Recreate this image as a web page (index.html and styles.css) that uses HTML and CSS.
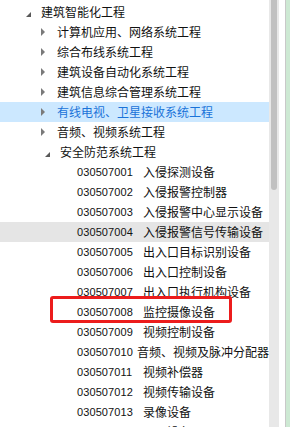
FILE: index.html
```html
<!DOCTYPE html>
<html lang="zh-CN">

<head>
    <meta charset="UTF-8">
    <meta name="viewport" content="width=device-width, initial-scale=1.0">
    <title>清单项目树</title>
    <link rel="stylesheet" href="styles.css">
</head>

<body>
    <div class="frame">
        <div class="tree-panel">
            <ul class="tree">
                <li class="node level-0"><span class="arrow open"></span>建筑智能化工程</li>
                <li class="node level-1"><span class="arrow"></span>计算机应用、网络系统工程</li>
                <li class="node level-1"><span class="arrow"></span>综合布线系统工程</li>
                <li class="node level-1"><span class="arrow"></span>建筑设备自动化系统工程</li>
                <li class="node level-1"><span class="arrow"></span>建筑信息综合管理系统工程</li>
                <li class="node level-1 selected"><span class="arrow"></span>有线电视、卫星接收系统工程</li>
                <li class="node level-1"><span class="arrow"></span>音频、视频系统工程</li>
                <li class="node level-1"><span class="arrow open"></span>安全防范系统工程</li>
                <li class="node level-2"><span class="code">030507001</span>入侵探测设备</li>
                <li class="node level-2"><span class="code">030507002</span>入侵报警控制器</li>
                <li class="node level-2"><span class="code">030507003</span>入侵报警中心显示设备</li>
                <li class="node level-2 hover"><span class="code">030507004</span>入侵报警信号传输设备</li>
                <li class="node level-2"><span class="code">030507005</span>出入口目标识别设备</li>
                <li class="node level-2"><span class="code">030507006</span>出入口控制设备</li>
                <li class="node level-2"><span class="code">030507007</span>出入口执行机构设备</li>
                <li class="node level-2"><span class="code">030507008</span>监控摄像设备</li>
                <li class="node level-2"><span class="code">030507009</span>视频控制设备</li>
                <li class="node level-2"><span class="code">030507010</span>音频、视频及脉冲分配器</li>
                <li class="node level-2"><span class="code">030507011</span>视频补偿器</li>
                <li class="node level-2"><span class="code">030507012</span>视频传输设备</li>
                <li class="node level-2"><span class="code">030507013</span>录像设备</li>
                <li class="node level-2"><span class="code">030507014</span>显示设备</li>
            </ul>
            <!-- red annotation box around 030507008 -->
            <div class="mark"></div>
        </div>
        <div class="scrollbar">
            <div class="thumb"></div>
        </div>
        <div class="gutter"></div>
        <div class="side"></div>
    </div>
</body>

</html>
```

FILE: styles.css
```css
body {
    margin: 0;
    padding: 0;
    background-color: #fff;
    font-family: "Noto Sans CJK SC", "Liberation Sans", sans-serif;
    font-size: 12px;
    color: #111;
    overflow: hidden;
}

.frame {
    display: flex;
    height: 427px;
    overflow: hidden;
}

.tree-panel {
    position: relative;
    width: 269px;
    flex-shrink: 0;
    overflow: hidden;
}

.tree {
    list-style: none;
    margin: 0;
    padding: 2px 0 0 0;
}

.node {
    display: flex;
    align-items: center;
    height: 20px;
    line-height: 20px;
    white-space: nowrap;
}

.level-0 {
    padding-left: 21px;
}

.level-1 {
    padding-left: 40px;
}

.level-2 {
    padding-left: 77px;
}

.selected {
    background-color: #cce8ff;
    color: #1a73d9;
}

.hover {
    background-color: #e5e5e5;
}

.arrow {
    display: inline-block;
    width: 0;
    height: 0;
    margin-right: 12px;
    border-top: 4px solid transparent;
    border-bottom: 4px solid transparent;
    border-left: 4px solid #7a7a7a;
    margin-left: 1px;
}

.arrow.open {
    width: 0;
    height: 0;
    margin-left: 0;
    margin-right: 11px;
    border-top: 5px solid transparent;
    border-left: 5px solid transparent;
    border-bottom: 0;
    border-right: 5px solid #595959;
    margin-top: 4px;
    margin-right: 10px;
}

.code {
    display: inline-block;
    width: 66px;
    font-family: "Liberation Sans", sans-serif;
    font-size: 11px;
    letter-spacing: 0.1px;
}

.mark {
    position: absolute;
    left: 50px;
    top: 296px;
    width: 176px;
    height: 21px;
    border: 3px solid #ec1c1c;
    border-radius: 3px;
}

.scrollbar {
    width: 10px;
    flex-shrink: 0;
    background-color: #e8e8e8;
}

.thumb {
    margin-left: 2px;
    width: 6px;
    height: 190px;
    background-color: #c1c1c1;
    border-radius: 0 0 3px 3px;
}

.gutter {
    width: 6px;
    flex-shrink: 0;
    background-color: #fff;
    border-right: 1px solid #c9c9c9;
}

.side {
    flex: 1;
    background-color: #cde9d3;
}
```
